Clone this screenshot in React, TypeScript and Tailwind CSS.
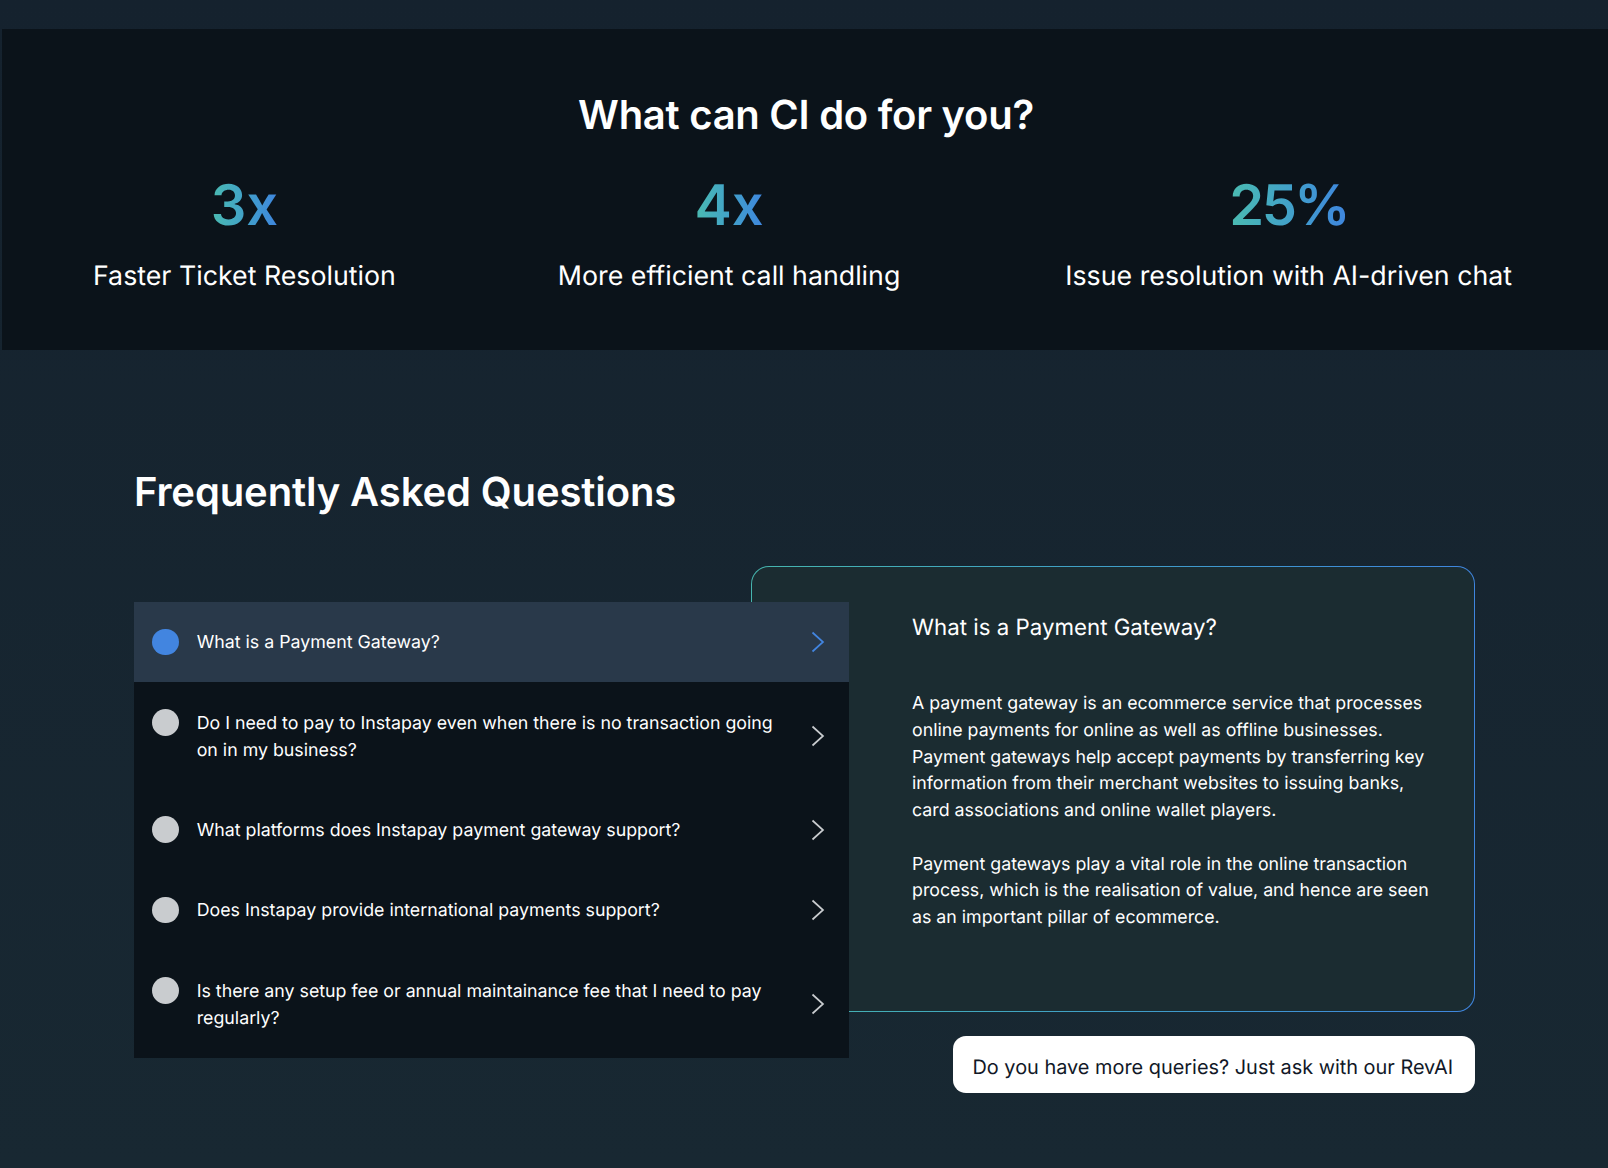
const stats = [
  { value: "3x", label: "Faster Ticket Resolution", cls: "", box: "-mr-[3px]" },
  { value: "4x", label: "More efficient call handling", cls: "", box: "" },
  { value: "25%", label: "Issue resolution with AI-driven chat", cls: "tracking-[-2.5px]", box: "" },
];

const faqs = [
  "What is a Payment Gateway?",
  "Do I need to pay to Instapay even when there is no transaction going on in my business?",
  "What platforms does Instapay payment gateway support?",
  "Does Instapay provide international payments support?",
  "Is there any setup fee or annual maintainance fee that I need to pay regularly?",
];

function Chevron({ active }: { active: boolean }) {
  return (
    <svg
      width="14"
      height="22"
      viewBox="0 0 14 22"
      fill="none"
      stroke={active ? "#4285e0" : "#c9cccf"}
      strokeWidth="1.7"
      className="shrink-0"
    >
      <path d="M1.5 1.5 L12 11 L1.5 20.5" />
    </svg>
  );
}

export default function App() {
  return (
    <div className="min-h-[1168px] w-full bg-linear-to-b from-[#15222e] to-[#182832] pt-[29px] font-['Inter',sans-serif] text-white antialiased [text-rendering:geometricPrecision]">
      <section className="ml-[2px] flex h-[321px] flex-col items-center bg-[#0b131a] pt-[59px]">
        <h2 className="pl-[2px] text-[40px] leading-[53px] font-semibold tracking-[-0.27px]">What can CI do for you?</h2>
        <div className="mt-[24px] mr-[5px] flex gap-[165px]">
          {stats.map((s) => (
            <div key={s.value} className={`flex flex-col items-center ${s.box}`}>
              <div className={`bg-linear-to-r from-[#4bbbb0] to-[#3f85de] bg-clip-text text-[56px] leading-[80px] font-semibold text-transparent ${s.cls}`}>
                {s.value}
              </div>
              <div className="mt-[10.5px] text-[26.75px] leading-[40px] whitespace-nowrap">{s.label}</div>
            </div>
          ))}
        </div>
      </section>

      <section className="pt-[115px] pr-[133px] pl-[134px]">
        <h2 className="text-[40px] leading-[53px] font-semibold tracking-[-0.12px]">Frequently Asked Questions</h2>
        <div className="mt-[48px] flex items-start">
          <ul className="relative z-10 mt-[36px] w-[715px] shrink-0 bg-[#0b131a]">
            {faqs.map((q, i) => {
              const active = i === 0;
              return (
                <li
                  key={q}
                  className={`flex items-center gap-[24px] py-[26.8px] pr-[24px] pl-[18px] ${active ? "bg-[#29394a]" : ""}`}
                >
                  <div className="flex flex-1 items-start gap-[18px]">
                    <span className={`h-[26.67px] w-[26.67px] shrink-0 rounded-full ${active ? "bg-[#4285e0]" : "bg-[#c9cccf]"}`} />
                    <p className="-mb-[1.6px] pt-[1.6px] text-[17.8px] leading-[26.8px]">{q}</p>
                  </div>
                  <Chevron active={active} />
                </li>
              );
            })}
          </ul>
          <div className="-ml-[98px] flex flex-1 flex-col items-end">
            <div className="w-full rounded-[18px] bg-linear-to-r from-[#46b5ae] to-[#3f85de] p-px">
              <div className="h-[444px] rounded-[17px] bg-[#1b2c31] pt-[44px] pr-[40px] pl-[160px]">
                <h3 className="text-[22.3px] leading-[33px]">What is a Payment Gateway?</h3>
                <div className="mt-[47px] text-[17.78px] leading-[26.75px]">
                  <p>
                    A payment gateway is an ecommerce service that processes online payments for online as well as offline businesses. Payment gateways help accept payments by transferring key information from their merchant websites to issuing banks, card associations and online wallet players.
                  </p>
                  <p className="mt-[26.75px]">
                    Payment gateways play a vital role in the online transaction process, which is the realisation of value, and hence are seen as an important pillar of ecommerce.
                  </p>
                </div>
              </div>
            </div>
            <div className="mt-[24px] flex h-[57px] items-center rounded-[13px] bg-white pt-[7px] pr-[22px] pl-[19px] text-[19.9px] whitespace-nowrap text-[#111827]">
              Do you have more queries? Just ask with our RevAI
            </div>
          </div>
        </div>
      </section>
    </div>
  );
}
